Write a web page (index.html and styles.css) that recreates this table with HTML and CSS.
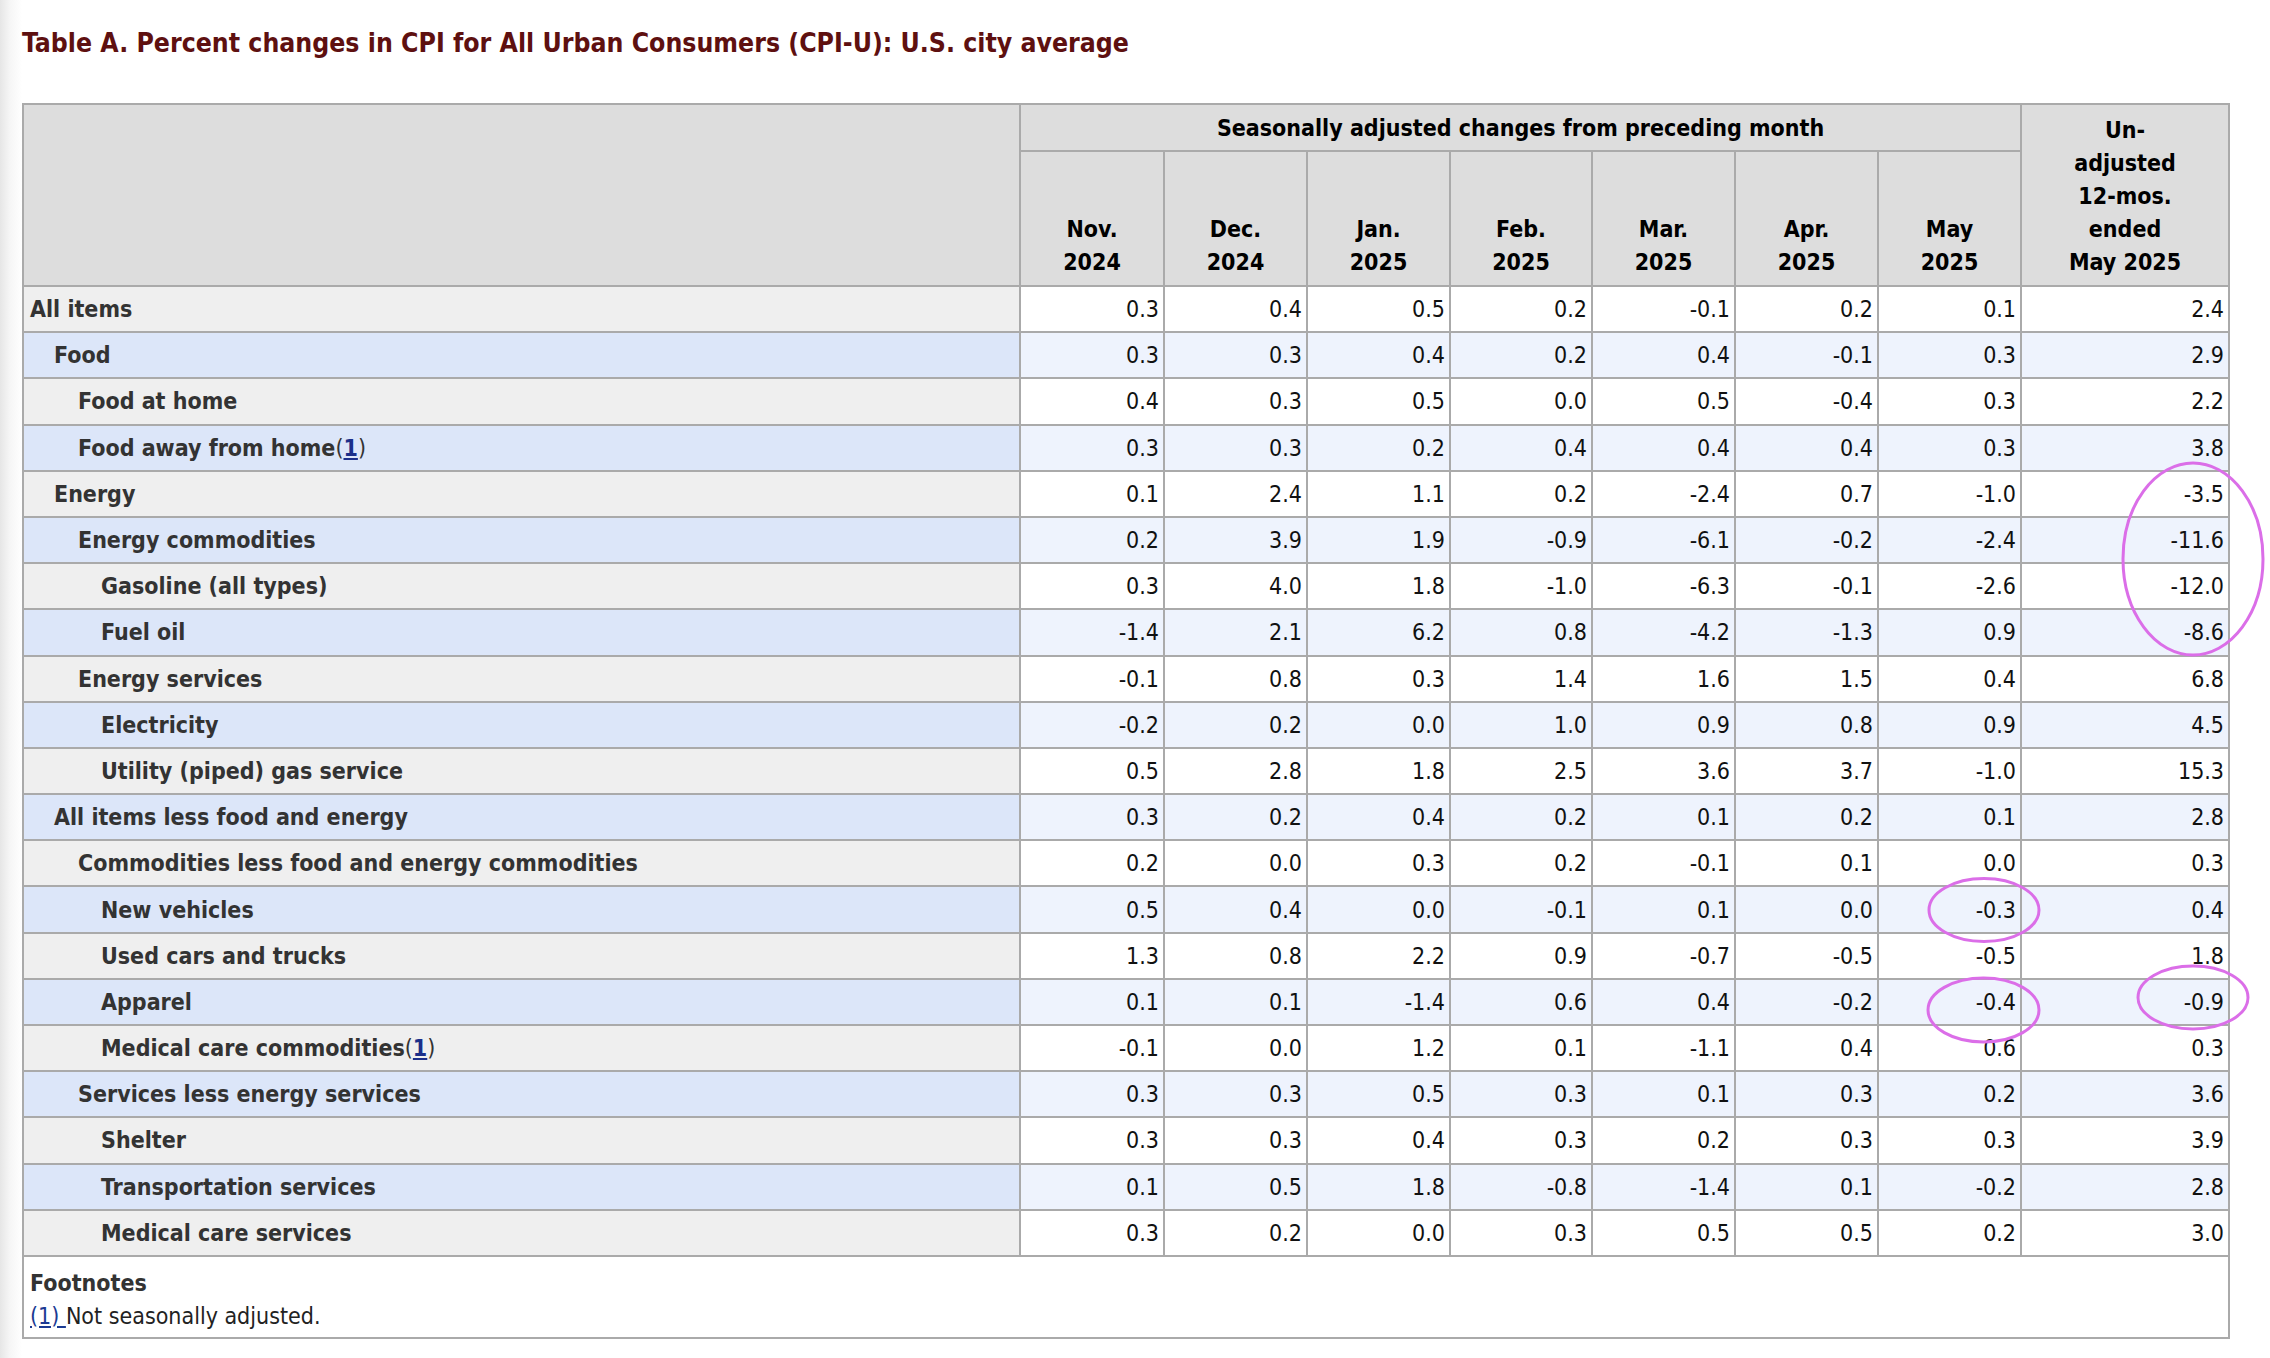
FILE: index.html
```html
<!DOCTYPE html>
<html lang="en">
<head>
<meta charset="utf-8">
<title>Table A. Percent changes in CPI for All Urban Consumers (CPI-U): U.S. city average</title>
<link rel="stylesheet" href="styles.css">
</head>
<body>
<h2 class="title">Table A. Percent changes in CPI for All Urban Consumers (CPI-U): U.S. city average</h2>
<table class="cpi">
  <colgroup>
    <col class="c-label">
    <col class="c-m1"><col class="c-m"><col class="c-m"><col class="c-m4"><col class="c-m"><col class="c-m"><col class="c-m">
    <col class="c-last">
  </colgroup>
  <thead>
    <tr class="h1">
      <th class="blank" rowspan="2"></th>
      <th class="group" colspan="7">Seasonally adjusted changes from preceding month</th>
      <th class="unadj" rowspan="2">Un-<br>adjusted<br>12-mos.<br>ended<br>May 2025</th>
    </tr>
    <tr class="h2">
      <th>Nov.<br>2024</th>
      <th>Dec.<br>2024</th>
      <th>Jan.<br>2025</th>
      <th>Feb.<br>2025</th>
      <th>Mar.<br>2025</th>
      <th>Apr.<br>2025</th>
      <th>May<br>2025</th>
    </tr>
  </thead>
  <tbody>
    <tr><th class="l0">All items</th><td>0.3</td><td>0.4</td><td>0.5</td><td>0.2</td><td>-0.1</td><td>0.2</td><td>0.1</td><td>2.4</td></tr>
    <tr><th class="l1">Food</th><td>0.3</td><td>0.3</td><td>0.4</td><td>0.2</td><td>0.4</td><td>-0.1</td><td>0.3</td><td>2.9</td></tr>
    <tr><th class="l2">Food at home</th><td>0.4</td><td>0.3</td><td>0.5</td><td>0.0</td><td>0.5</td><td>-0.4</td><td>0.3</td><td>2.2</td></tr>
    <tr><th class="l2">Food away from home<span class="fn">(<a href="#fn1">1</a>)</span></th><td>0.3</td><td>0.3</td><td>0.2</td><td>0.4</td><td>0.4</td><td>0.4</td><td>0.3</td><td>3.8</td></tr>
    <tr><th class="l1">Energy</th><td>0.1</td><td>2.4</td><td>1.1</td><td>0.2</td><td>-2.4</td><td>0.7</td><td>-1.0</td><td>-3.5</td></tr>
    <tr><th class="l2">Energy commodities</th><td>0.2</td><td>3.9</td><td>1.9</td><td>-0.9</td><td>-6.1</td><td>-0.2</td><td>-2.4</td><td>-11.6</td></tr>
    <tr><th class="l3">Gasoline (all types)</th><td>0.3</td><td>4.0</td><td>1.8</td><td>-1.0</td><td>-6.3</td><td>-0.1</td><td>-2.6</td><td>-12.0</td></tr>
    <tr><th class="l3">Fuel oil</th><td>-1.4</td><td>2.1</td><td>6.2</td><td>0.8</td><td>-4.2</td><td>-1.3</td><td>0.9</td><td>-8.6</td></tr>
    <tr><th class="l2">Energy services</th><td>-0.1</td><td>0.8</td><td>0.3</td><td>1.4</td><td>1.6</td><td>1.5</td><td>0.4</td><td>6.8</td></tr>
    <tr><th class="l3">Electricity</th><td>-0.2</td><td>0.2</td><td>0.0</td><td>1.0</td><td>0.9</td><td>0.8</td><td>0.9</td><td>4.5</td></tr>
    <tr><th class="l3">Utility (piped) gas service</th><td>0.5</td><td>2.8</td><td>1.8</td><td>2.5</td><td>3.6</td><td>3.7</td><td>-1.0</td><td>15.3</td></tr>
    <tr><th class="l1">All items less food and energy</th><td>0.3</td><td>0.2</td><td>0.4</td><td>0.2</td><td>0.1</td><td>0.2</td><td>0.1</td><td>2.8</td></tr>
    <tr><th class="l2">Commodities less food and energy commodities</th><td>0.2</td><td>0.0</td><td>0.3</td><td>0.2</td><td>-0.1</td><td>0.1</td><td>0.0</td><td>0.3</td></tr>
    <tr><th class="l3">New vehicles</th><td>0.5</td><td>0.4</td><td>0.0</td><td>-0.1</td><td>0.1</td><td>0.0</td><td>-0.3</td><td>0.4</td></tr>
    <tr><th class="l3">Used cars and trucks</th><td>1.3</td><td>0.8</td><td>2.2</td><td>0.9</td><td>-0.7</td><td>-0.5</td><td>-0.5</td><td>1.8</td></tr>
    <tr><th class="l3">Apparel</th><td>0.1</td><td>0.1</td><td>-1.4</td><td>0.6</td><td>0.4</td><td>-0.2</td><td>-0.4</td><td>-0.9</td></tr>
    <tr><th class="l3">Medical care commodities<span class="fn">(<a href="#fn1">1</a>)</span></th><td>-0.1</td><td>0.0</td><td>1.2</td><td>0.1</td><td>-1.1</td><td>0.4</td><td>0.6</td><td>0.3</td></tr>
    <tr><th class="l2">Services less energy services</th><td>0.3</td><td>0.3</td><td>0.5</td><td>0.3</td><td>0.1</td><td>0.3</td><td>0.2</td><td>3.6</td></tr>
    <tr><th class="l3">Shelter</th><td>0.3</td><td>0.3</td><td>0.4</td><td>0.3</td><td>0.2</td><td>0.3</td><td>0.3</td><td>3.9</td></tr>
    <tr><th class="l3">Transportation services</th><td>0.1</td><td>0.5</td><td>1.8</td><td>-0.8</td><td>-1.4</td><td>0.1</td><td>-0.2</td><td>2.8</td></tr>
    <tr><th class="l3">Medical care services</th><td>0.3</td><td>0.2</td><td>0.0</td><td>0.3</td><td>0.5</td><td>0.5</td><td>0.2</td><td>3.0</td></tr>
  </tbody>
  <tfoot>
    <tr>
      <td class="notes" colspan="9">
        <div class="notes-title">Footnotes</div>
        <div class="note" id="fn1"><a href="#fn1">(1) </a>Not seasonally adjusted.</div>
      </td>
    </tr>
  </tfoot>
</table>

<svg class="marks" width="2270" height="1358" viewBox="0 0 2270 1358" aria-hidden="true">
  <ellipse cx="2193" cy="559" rx="70" ry="96" />
  <ellipse cx="1984" cy="910" rx="55" ry="31.5" />
  <ellipse cx="1983.5" cy="1010" rx="55.5" ry="32" />
  <ellipse cx="2193" cy="997.5" rx="55" ry="31.5" />
</svg>
</body>
</html>
```

FILE: styles.css
```css
html, body {
  margin: 0;
  padding: 0;
}

body {
  padding-left: 22px;
  min-height: 1358px;
  box-sizing: border-box;
  background: linear-gradient(to right, #e6e6e6 0, #f6f6f6 10px, #ffffff 22px);
  font-family: "DejaVu Sans Condensed", "DejaVu Sans", sans-serif;
  color: #333;
}

.title {
  margin: 0;
  padding-top: 27px;
  font-size: 26.4px;
  line-height: 32px;
  font-weight: bold;
  color: #5e1010;
}

.cpi {
  margin-top: 44px;
  border-collapse: collapse;
  table-layout: fixed;
  width: 2206px;
  font-size: 23px;
  border: 2px solid #aaa;
}

.c-label { width: 997px; }
.c-m1 { width: 144px; }
.c-m { width: 143px; }
.c-m4 { width: 142px; }
.c-last { width: 208px; }

.cpi th,
.cpi td {
  border: 2px solid #aaa;
  padding: 0;
}

.cpi thead th {
  background: #dddddd;
  color: #000;
  font-weight: bold;
  text-align: center;
  line-height: 33px;
}

.cpi .h1 {
  height: 47px;
}

.cpi .h1 .group {
  vertical-align: middle;
  padding-top: 1px;
}

.cpi .h2 {
  height: 135px;
}

.cpi .h2 th,
.cpi .unadj {
  vertical-align: bottom;
  padding-bottom: 6px;
}

.cpi tbody tr {
  height: 46.2px;
}

.cpi tbody th {
  text-align: left;
  font-weight: bold;
  color: #333;
  background: #efefef;
  white-space: nowrap;
}

.cpi tbody td {
  text-align: right;
  padding-right: 4px;
  color: #111;
  background: #ffffff;
}

.cpi tbody tr:nth-child(even) th {
  background: #dce6f9;
}

.cpi tbody tr:nth-child(even) td {
  background: #eef3fd;
}

.cpi .l0 { padding-left: 6px; }
.cpi .l1 { padding-left: 30px; }
.cpi .l2 { padding-left: 54px; }
.cpi .l3 { padding-left: 77px; }

.fn {
  font-weight: normal;
}

.fn a {
  font-weight: bold;
  color: #1b2f8a;
  text-decoration: underline;
}

.cpi tfoot td.notes {
  background: #fff;
  text-align: left;
  vertical-align: top;
  padding: 10px 6px 4px 6px;
  color: #222;
}

.notes-title {
  font-weight: bold;
  color: #333;
  line-height: 33px;
}

.note {
  line-height: 33px;
}

.note a {
  color: #1b3a92;
  text-decoration: underline;
}

.marks {
  position: absolute;
  left: 0;
  top: 0;
  pointer-events: none;
}

.marks ellipse {
  fill: none;
  stroke: #db6ee8;
  stroke-width: 3;
}
```
